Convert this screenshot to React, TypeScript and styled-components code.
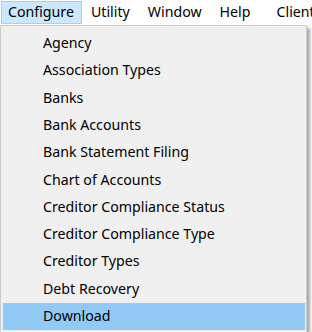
import React from "react";
import styled, { createGlobalStyle, css } from "styled-components";

const GlobalStyle = createGlobalStyle`
  html, body {
    margin: 0;
    padding: 0;
    background: #ffffff;
  }
  body {
    font-family: "Noto Sans", "Open Sans", sans-serif;
    font-size: 14.2px;
    color: #000000;
    overflow: hidden;
  }
`;

const topMenus = ["Configure", "Utility", "Window", "Help", "Client"];

const configureItems = [
  "Agency",
  "Association Types",
  "Banks",
  "Bank Accounts",
  "Bank Statement Filing",
  "Chart of Accounts",
  "Creditor Compliance Status",
  "Creditor Compliance Type",
  "Creditor Types",
  "Debt Recovery",
  "Download",
];

const App: React.FC = () => {
  return (
    <Screen>
      <GlobalStyle />
      <MenuBar>
        {topMenus.map((label, i) => (
          <BarItem key={label} open={i === 0}>
            {label}
          </BarItem>
        ))}
      </MenuBar>
      <Dropdown>
        {configureItems.map((label) => (
          <Row key={label} hover={label === "Download"}>
            {label}
          </Row>
        ))}
      </Dropdown>
    </Screen>
  );
};

const Screen = styled.div`
  width: 312px;
  height: 332px;
  overflow: hidden;
  background: #ffffff;
`;

const MenuBar = styled.div`
  display: flex;
  align-items: stretch;
  height: 25px;
  padding: 1px 0 0 1px;
  box-sizing: border-box;
  white-space: nowrap;
`;

const BarItem = styled.div<{ open?: boolean }>`
  display: flex;
  align-items: center;
  height: 23px;
  padding: 0 8px 1px 8px;
  border: 1px solid transparent;
  box-sizing: border-box;
  line-height: 1;

  &:first-child {
    padding: 0 7px 1px 6px;
  }

  &:last-child {
    margin-left: 8px;
  }

  ${({ open }) =>
    open &&
    css`
      background: #cce8ff;
      border-color: #99d1ff;
    `}
`;

const Dropdown = styled.div`
  width: 307px;
  box-sizing: border-box;
  background: #f0f0f0;
  border: 1px solid #cccccc;
  padding: 4px 1px 2px 2px;
  box-shadow: 3px 3px 3px rgba(0, 0, 0, 0.35);
`;

const Row = styled.div<{ hover?: boolean }>`
  display: flex;
  align-items: center;
  height: 27.3px;
  padding: 0 0 1px 40px;
  box-sizing: border-box;
  line-height: 1;
  background: ${({ hover }) => (hover ? "#91c9f7" : "transparent")};
`;

export default App;
